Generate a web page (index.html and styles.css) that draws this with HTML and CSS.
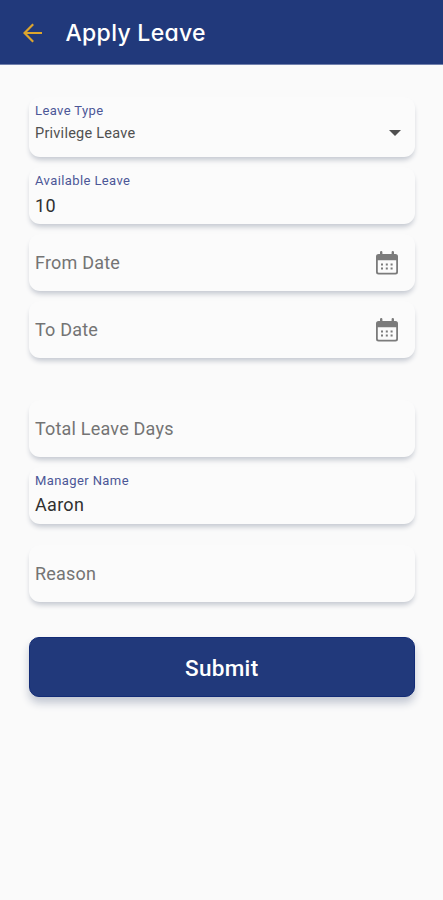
FILE: index.html
```
<!DOCTYPE html>
<html lang="en">
<head>
<meta charset="utf-8">
<title>Apply Leave</title>
<link rel="stylesheet" href="styles.css">
</head>
<body>
<svg class="defs" width="0" height="0" aria-hidden="true">
  <symbol id="calendar" viewBox="0 0 22 24">
    <path fill="#7b7b7b" fill-rule="evenodd" d="M4 1.2a1.2 1.2 0 0 1 2.4 0V3h9.2V1.2a1.2 1.2 0 0 1 2.4 0V3h1.5A2.5 2.5 0 0 1 22 5.500V21a2.500 2.500 0 0 1-2.500 2.500h-17A2.500 2.500 0 0 1 0 21V5.500A2.500 2.500 0 0 1 2.500 3H4zM1.800 9.200v11.500a1 1 0 0 0 1 1h16.400a1 1 0 0 0 1-1V9.200z"/>
    <path fill="#7b7b7b" d="M5 12.500h2v2H5zm4.800 0h2v2h-2zm4.800 0h2v2h-2zM5 16.500h2v2H5zm4.800 0h2v2h-2zm4.800 0h2v2h-2z"/>
  </symbol>
</svg>
<header class="bar">
  <svg class="back" viewBox="0 0 20 20"><path d="M19 10H2M10.200 1.300L1.500 10l8.700 8.700"/></svg>
  <h1 class="title">Apply Leave</h1>
</header>
<main class="form">
  <div class="field field-select">
    <span class="label label-type">Leave Type</span>
    <span class="choice">Privilege Leave</span>
    <svg class="caret" viewBox="0 0 12 6"><path d="M0 0h12L6 6z"/></svg>
  </div>
  <div class="field filled">
    <span class="label">Available Leave</span>
    <span class="value">10</span>
  </div>
  <div class="field"><span class="hint">From Date</span><svg class="calendar"><use href="#calendar"/></svg></div>
  <div class="field"><span class="hint">To Date</span><svg class="calendar"><use href="#calendar"/></svg></div>
  <div class="field total"><span class="hint">Total Leave Days</span></div>
  <div class="field filled">
    <span class="label">Manager Name</span>
    <span class="value name">Aaron</span>
  </div>
  <div class="field reason"><span class="hint">Reason</span></div>
  <button class="submit">Submit</button>
</main>
</body>
</html>
```
FILE: styles.css
```
* { box-sizing: border-box; }
body { margin: 0; min-height: 900px; background: #fafafa; font-family: Roboto, "Liberation Sans", sans-serif; }
.defs { display: block; height: 0; }
.bar { display: flex; align-items: center; height: 65px; padding-left: 23px; background: #21397b; border-bottom: 1px solid #7180ac; }
.back { width: 20px; height: 20px; margin-top: 1px; fill: none; stroke: #dda52d; stroke-width: 2.2; }
.title { margin: 2px 0 0 22.500px; color: #fff; font: 500 23px/30px Inter, sans-serif; font-feature-settings: "cv11"; letter-spacing: .3px; }
.form { display: flex; flex-direction: column; gap: 10px; padding: 32px 28.500px 0 29px; }
.field { display: flex; align-items: center; justify-content: space-between; height: 57px; padding: 0 17px 0 6px; border-radius: 11px; background: #fbfbfb; box-shadow: 0 4px 5px -1px #c5c9d1; }
.filled { flex-direction: column; align-items: flex-start; justify-content: flex-start; padding-top: 6px; }
.field-select { display: grid; grid-template-columns: 1fr auto; grid-template-rows: 16px 20px; align-content: start; height: 60px; padding: 6px 14px 0 6px; row-gap: 5px; }
.label { color: #4c5797; font-size: 13px; line-height: 16px; letter-spacing: .4px; }
.field-select .label { grid-column: 1 / 3; }
.choice { color: #505050; font-size: 14.500px; line-height: 20px; letter-spacing: .25px; }
.caret { width: 12px; height: 6px; margin-top: 6px; align-self: start; fill: #4f4f4f; }
.value { margin-top: 6px; color: #303030; font-size: 18px; line-height: 22px; letter-spacing: .3px; }
.name { margin-top: 5px; }
.hint { color: #747474; font-size: 18px; line-height: 22px; letter-spacing: .2px; }
.calendar { width: 22px; height: 24px; margin-top: 1px; }
.total { margin-top: 32px; }
.reason { margin-top: 11px; }
.submit { height: 60px; margin-top: 25px; padding-top: 3px; border: 1px solid #122b76; border-radius: 10px; background: #21397b; color: #fff; font: 500 22.500px/26px Roboto, sans-serif; letter-spacing: .3px; box-shadow: 0 6px 8px #c2c7d2; }
```
